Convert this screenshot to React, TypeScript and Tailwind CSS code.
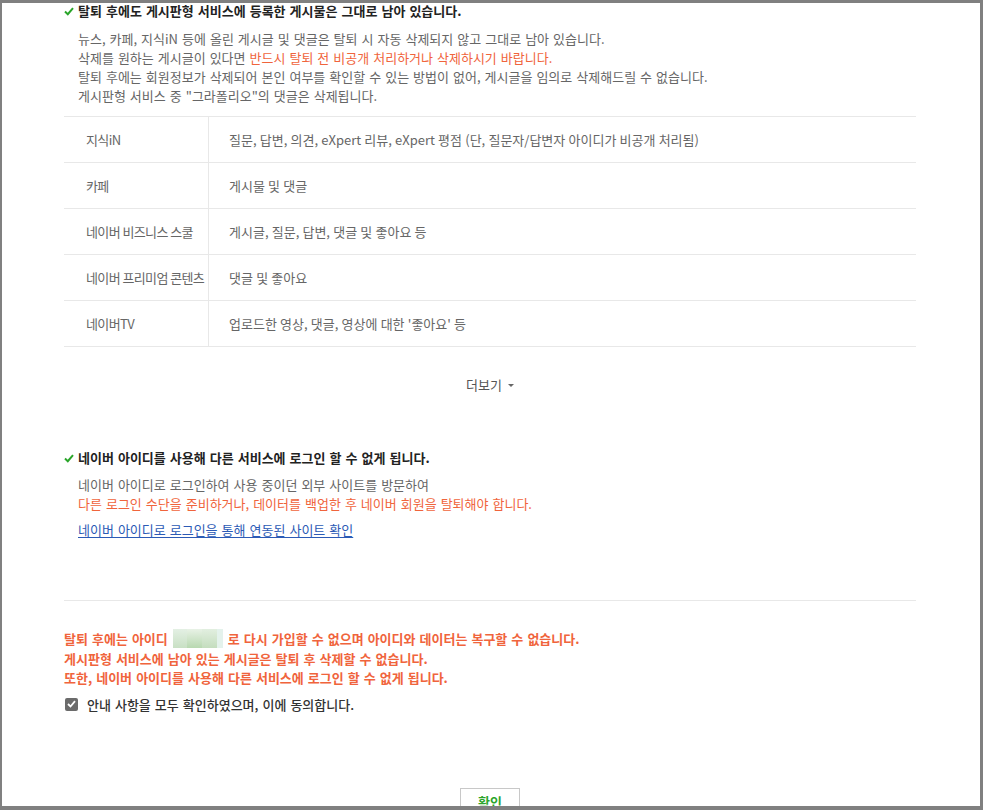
import React from "react";

const FONT = { fontFamily: '"Noto Sans CJK KR", "Noto Sans", sans-serif' };

// small green check used in section titles
function Check() {
  return (
    <svg width="10" height="9" viewBox="0 0 10 9" className="mr-[4px] shrink-0">
      <path d="M1 4.6 L3.8 7.2 L9 1.2" fill="none" stroke="#2aa52a" strokeWidth="2" />
    </svg>
  );
}

const rows = [
  ["지식iN", "질문, 답변, 의견, eXpert 리뷰, eXpert 평점 (단, 질문자/답변자 아이디가 비공개 처리됨)"],
  ["카페", "게시물 및 댓글"],
  ["네이버 비즈니스 스쿨", "게시글, 질문, 답변, 댓글 및 좋아요 등"],
  ["네이버 프리미엄 콘텐츠", "댓글 및 좋아요"],
  ["네이버TV", "업로드한 영상, 댓글, 영상에 대한 '좋아요' 등"],
];

export default function App() {
  return (
    <div
      className="w-[983px] h-[810px] overflow-hidden bg-white border-t-[3px] border-l-2 border-r-[3px] border-b-4 border-[#808080] text-[13px] [word-spacing:1.1px]"
      style={FONT}
    >
      <div className="pl-[62px] w-[914px]">
        {/* section 1 */}
        <div className="flex items-center h-[16px] font-bold text-[#222]">
          <Check />
          탈퇴 후에도 게시판형 서비스에 등록한 게시물은 그대로 남아 있습니다.
        </div>
        <div className="pl-[14px] mt-[10px] leading-[19px] text-[#666]">
          <p>뉴스, 카페, 지식iN 등에 올린 게시글 및 댓글은 탈퇴 시 자동 삭제되지 않고 그대로 남아 있습니다.</p>
          <p>
            삭제를 원하는 게시글이 있다면 <span className="text-[#f0643c]">반드시 탈퇴 전 비공개 처리하거나 삭제하시기 바랍니다.</span>
          </p>
          <p>탈퇴 후에는 회원정보가 삭제되어 본인 여부를 확인할 수 있는 방법이 없어, 게시글을 임의로 삭제해드릴 수 없습니다.</p>
          <p>게시판형 서비스 중 "그라폴리오"의 댓글은 삭제됩니다.</p>
        </div>

        <div className="mt-[11px] border-t border-[#e8e8e8]">
          {rows.map(([a, b]) => (
            <div key={a} className="flex h-[46px] border-b border-[#e8e8e8] text-[#666]">
              <div className="w-[145px] shrink-0 pl-[22px] flex items-center border-r border-[#e8e8e8] tracking-[-0.6px] [word-spacing:0px]">
                {a}
              </div>
              <div className="pl-[20px] flex items-center [word-spacing:0.3px]">{b}</div>
            </div>
          ))}
        </div>

        <div className="flex justify-center items-center mt-[30px] h-[16px] text-[#555]">
          더보기
          <span className="ml-[6px] inline-block w-0 h-0 border-l-[3px] border-r-[3px] border-t-[3px] border-l-transparent border-r-transparent border-t-[#666]" />
        </div>

        {/* section 2 */}
        <div className="flex items-center h-[16px] mt-[57px] font-bold text-[#222]">
          <Check />
          네이버 아이디를 사용해 다른 서비스에 로그인 할 수 없게 됩니다.
        </div>
        <div className="pl-[14px] mt-[9px] leading-[19px] text-[#666]">
          <p>네이버 아이디로 로그인하여 사용 중이던 외부 사이트를 방문하여</p>
          <p className="text-[#f0643c]">다른 로그인 수단을 준비하거나, 데이터를 백업한 후 네이버 회원을 탈퇴해야 합니다.</p>
          <p className="mt-[7px]">
            <a className="text-[#2b5ab5] underline underline-offset-2">네이버 아이디로 로그인을 통해 연동된 사이트 확인</a>
          </p>
        </div>

        <div className="mt-[61px] border-t border-[#e8e8e8]" />

        {/* warnings */}
        <div className="mt-[28px] font-bold text-[#f0643c] leading-[19.5px]">
          <p className="flex items-center">
            탈퇴 후에는 아이디
            <span className="inline-flex mx-[5px] w-[50px] h-[19px]">
              <span className="flex-1 bg-[linear-gradient(#e4f0e4,#c8e0c4)]" />
              <span className="flex-1 bg-[linear-gradient(#e8f2e6,#b8d8b0)]" />
              <span className="flex-1 bg-[linear-gradient(#e2efe0,#c4ddbe)]" />
              <span className="w-[6px] bg-[#e4f2ec]" />
            </span>
            로 다시 가입할 수 없으며 아이디와 데이터는 복구할 수 없습니다.
          </p>
          <p>게시판형 서비스에 남아 있는 게시글은 탈퇴 후 삭제할 수 없습니다.</p>
          <p>또한, 네이버 아이디를 사용해 다른 서비스에 로그인 할 수 없게 됩니다.</p>
        </div>

        <label className="flex items-center mt-[7px] text-[#333] font-medium">
          <span className="w-[13px] h-[13px] rounded-[2px] bg-[#6b6b6b] flex items-center justify-center mr-[9px] ml-[1px]">
            <svg width="9" height="8" viewBox="0 0 9 8">
              <path d="M1 4 L3.5 6.5 L8 1.2" fill="none" stroke="#fff" strokeWidth="1.8" />
            </svg>
          </span>
          안내 사항을 모두 확인하였으며, 이에 동의합니다.
        </label>

        <div className="flex justify-center mt-[74px]">
          <button className="w-[60px] h-[34px] border border-[#c8c8c8] bg-white text-[#2aa52a] font-bold pb-[6px]">확인</button>
        </div>
      </div>
    </div>
  );
}
